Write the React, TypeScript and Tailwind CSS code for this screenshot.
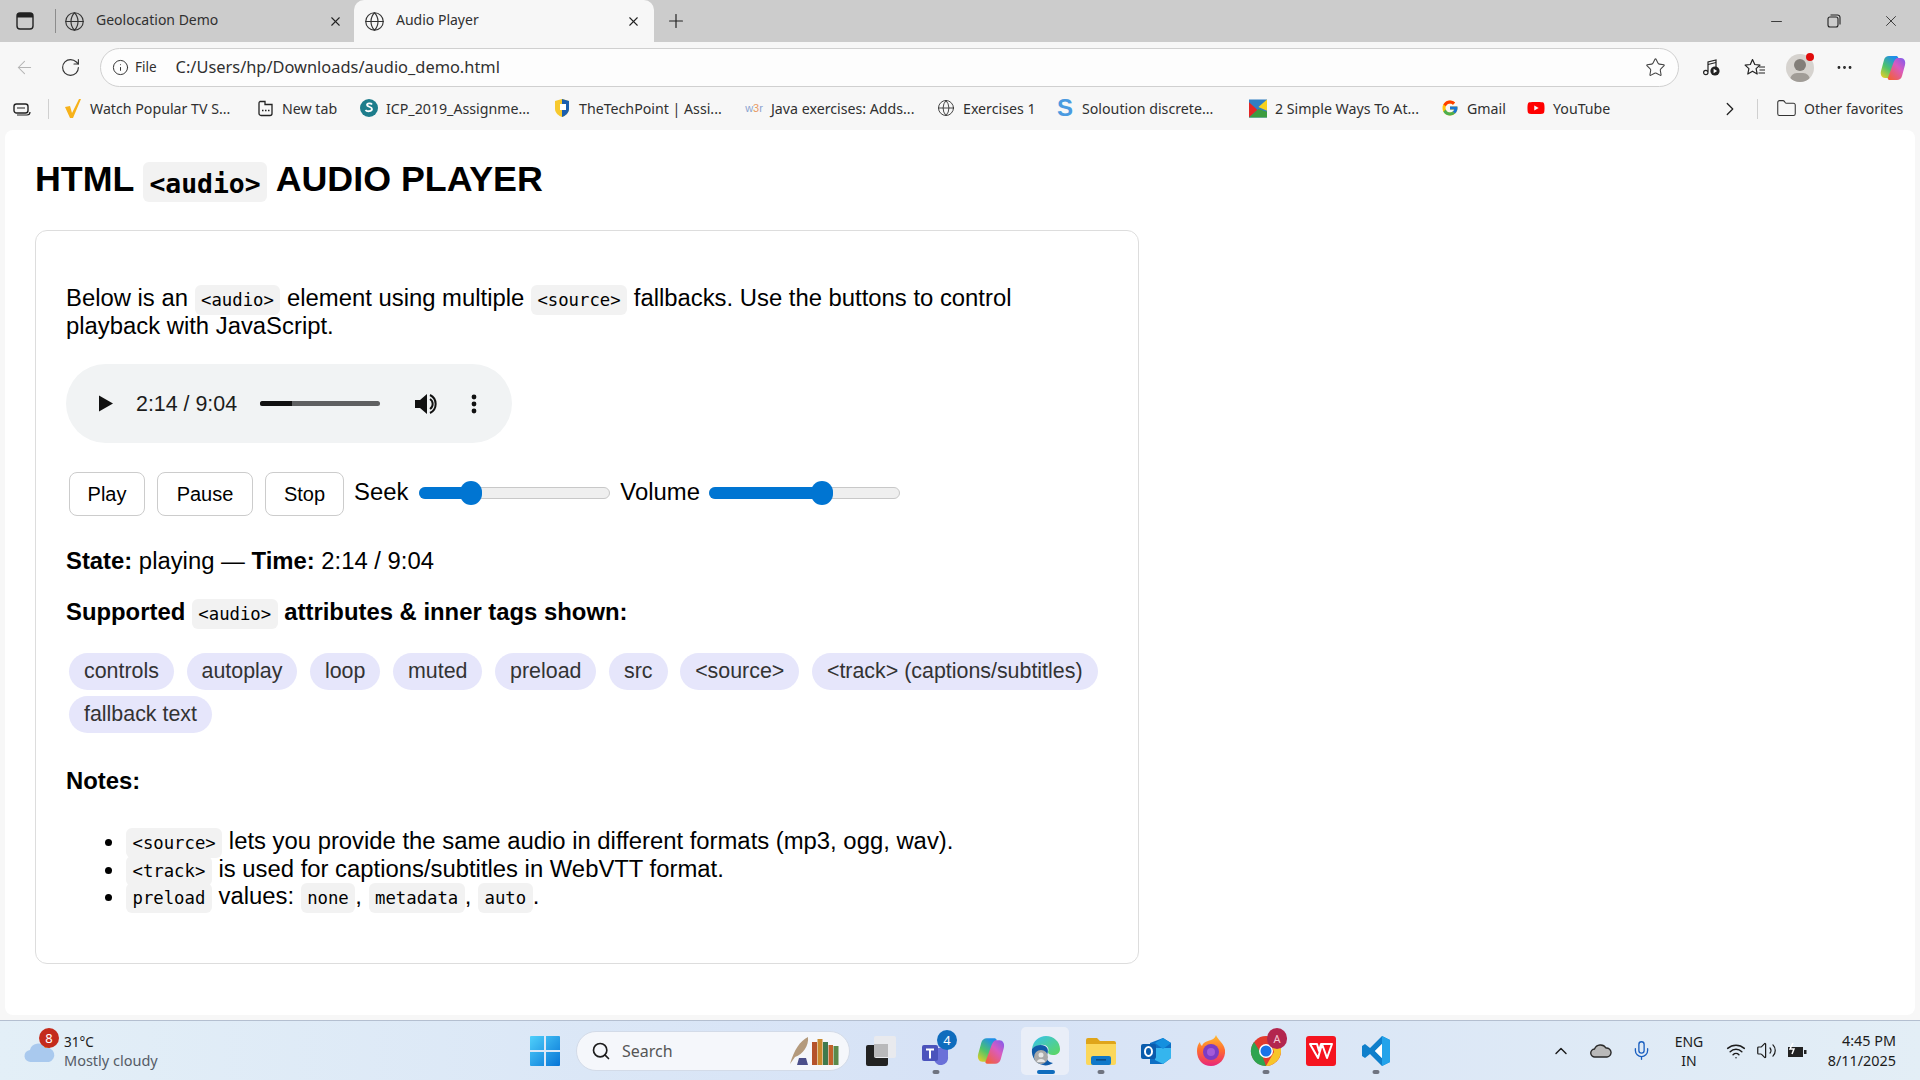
import { ArrowLeft, RotateCw, Info, Globe, X, Plus, Star, Minus, ChevronRight, Folder, ChevronUp, Mic, Wifi, Volume2, Search, MoreHorizontal } from 'lucide-react';
import { FcGoogle } from 'react-icons/fc';
import { FaYoutube } from 'react-icons/fa';

const CHROME = "font-['Noto_Sans','Open_Sans',sans-serif]";

function Code({ children }: { children: React.ReactNode }) {
  return <code className="font-['DejaVu_Sans_Mono',monospace] text-[17.3px] leading-none font-normal bg-[#f2f2f2] rounded-[6px] px-[6.5px] py-[5px]">{children}</code>;
}

function Bookmark({ icon, label, className }: { icon: React.ReactNode; label: string; className: string }) {
  return (
    <div className={`flex items-center shrink-0 ${className}`}>
      <span className="w-[18px] h-[18px] flex items-center justify-center shrink-0">{icon}</span>
      <span className="text-[14.2px] text-[#303030] whitespace-nowrap ml-[8px]">{label}</span>
    </div>
  );
}

function CopilotLogo({ size, id }: { size: number; id: string }) {
  return (
    <svg width={size} height={size} viewBox="0 0 28 28">
      <defs>
        <linearGradient id={`${id}a`} x1="0" y1="1" x2="0.6" y2="0"><stop offset="0" stopColor="#f5d020" /><stop offset="0.5" stopColor="#4fc36a" /><stop offset="1" stopColor="#1f8fe8" /></linearGradient>
        <linearGradient id={`${id}b`} x1="0.2" y1="1" x2="1" y2="0"><stop offset="0" stopColor="#f2603c" /><stop offset="0.55" stopColor="#d95bc0" /><stop offset="1" stopColor="#7a5cf0" /></linearGradient>
      </defs>
      <path d="M10 2h7c1 0 2 .6 2.3 1.6L14 18c-1 3-2 5-4 6H6c-3 0-5-3-4-7l3-11c.6-2.4 2.6-4 5-4z" fill={`url(#${id}a)`} />
      <path d="M18 26h-7c-1 0-2-.6-2.3-1.6L14 10c1-3 2-5 4-6h4c3 0 5 3 4 7l-3 11c-.6 2.4-2.6 4-5 4z" fill={`url(#${id}b)`} />
    </svg>
  );
}

function Tab({ title, active, className }: { title: string; active?: boolean; className: string }) {
  return (
    <div className={`flex items-center h-full shrink-0 ${active ? 'bg-[#f7f7f7] rounded-t-[10px]' : ''} ${className}`}>
      <Globe size={21} strokeWidth={1.3} className="text-[#333] shrink-0" />
      <span className="text-[14px] text-[#303030] ml-[11px] -mt-[3px] flex-1 whitespace-nowrap">{title}</span>
      <X size={15} strokeWidth={1.7} className="text-[#222] shrink-0" />
    </div>
  );
}

function TitleBar() {
  return (
    <div className="h-[42px] bg-[#cccccc] flex items-center shrink-0">
      <div className="w-[50px] flex justify-center">
        <svg width="18" height="18" viewBox="0 0 18 18" fill="none"><rect x="1" y="1" width="16" height="16" rx="3" stroke="#222" strokeWidth="1.4" /><path d="M1 4a3 3 0 0 1 3-3h10a3 3 0 0 1 3 3v1.5H1z" fill="#222" /></svg>
      </div>
      <div className="w-px h-[24px] bg-[#8c8c8c] ml-[5px]" />
      <Tab title="Geolocation Demo" className="w-[298px] pl-[8px] pr-[11px]" />
      <Tab title="Audio Player" active className="w-[300px] pl-[10px] pr-[13px]" />
      <Plus size={22} strokeWidth={1.3} className="text-[#222] ml-[11px]" />
      <div className="flex-1" />
      <Minus size={17} strokeWidth={1.2} className="text-[#222] mr-[42px]" />
      <svg width="14" height="14" viewBox="0 0 14 14" fill="none" className="mr-[41px]"><rect x="1" y="3" width="10" height="10" rx="2" stroke="#222" strokeWidth="1.1" /><path d="M3.5 1h7a2.5 2.5 0 0 1 2.5 2.5v7" stroke="#222" strokeWidth="1.1" /></svg>
      <X size={18} strokeWidth={1.1} className="text-[#222] mr-[20px]" />
    </div>
  );
}

function Toolbar() {
  return (
    <div className="h-[45px] bg-[#f7f7f7] flex items-start pt-[6px] shrink-0">
      <div className="w-[100px] h-[39px] flex items-center shrink-0">
        <ArrowLeft size={21} strokeWidth={1.2} className="text-[#b5b5b5] ml-[14px]" />
        <RotateCw size={21} strokeWidth={1.3} className="text-[#333] ml-[25px]" />
      </div>
      <div className="w-[1579px] h-[39px] bg-[#fdfdfd] border border-[#d0d0d0] rounded-full flex items-center pl-[11px] pr-[12px] shrink-0">
        <Info size={17} strokeWidth={1.4} className="text-[#333]" />
        <span className="text-[13.5px] text-[#303030] ml-[6px]">File</span>
        <span className="text-[16.4px] text-[#303030] ml-[19px]">C:/Users/hp/Downloads/audio_demo.html</span>
        <div className="flex-1" />
        <Star size={21} strokeWidth={1.2} className="text-[#444]" />
      </div>
      <div className="flex-1 h-[39px] flex items-center relative">
        <svg width="19" height="19" viewBox="0 0 19 19" fill="none" className="absolute left-[23px]"><path d="M6 13.5V4l8-2v7" stroke="#222" strokeWidth="1.2" /><path d="M6 6.5l8-2" stroke="#222" strokeWidth="1.2" /><circle cx="3.8" cy="14.5" r="2.2" stroke="#222" strokeWidth="1.2" /><circle cx="13" cy="13" r="4.6" fill="#222" /><path d="M11.6 10.8v4.4l3.5-2.2z" fill="#fff" /></svg>
        <svg width="22" height="20" viewBox="0 0 22 20" fill="none" className="absolute left-[65px]"><path d="M8.5 1.5l2.3 5 5.2.6-3.9 3.5 1.1 5.4-4.7-2.8-4.7 2.8 1.1-5.4L1.1 7.1l5.2-.6z" stroke="#222" strokeWidth="1.2" strokeLinejoin="round" /><path d="M15 9h6M15.5 12h5.5M14.5 15h6.5" stroke="#222" strokeWidth="1.1" /></svg>
        <div className="absolute left-[107px] w-[28px] h-[28px] rounded-full bg-[#d6d3cf] overflow-hidden">
          <div className="w-[12px] h-[12px] rounded-full bg-[#827e79] mx-auto mt-[5px]" />
          <div className="w-[20px] h-[14px] rounded-full bg-[#a09c97] mx-auto mt-[2px]" />
        </div>
        <div className="absolute left-[127px] top-[5px] w-[8px] h-[8px] rounded-full bg-[#e00b0b]" />
        <MoreHorizontal size={19} strokeWidth={1.6} className="absolute left-[156px] text-[#222]" />
        <span className="absolute left-[200px]"><CopilotLogo size={28} id="cpt" /></span>
      </div>
    </div>
  );
}

function BookmarksBar() {
  return (
    <div className="h-[43px] bg-[#f7f7f7] flex items-center shrink-0">
      <svg width="18" height="16" viewBox="0 0 18 16" fill="none" className="ml-[13px]"><rect x="1" y="3" width="14" height="9" rx="2.5" stroke="#222" strokeWidth="1.4" /><path d="M4 7h8M4 14h10a3 3 0 0 0 3-3" stroke="#222" strokeWidth="1.2" /></svg>
      <div className="w-px h-[20px] bg-[#d0d0d0] ml-[17px]" />
      <Bookmark className="ml-[15px] w-[192px]" label="Watch Popular TV S..." icon={<svg width="18" height="20" viewBox="0 0 18 20"><path d="M1 9l5-1 2 7L15 1h2L9 20H6z" fill="#f7b21a" /></svg>} />
      <Bookmark className="w-[104px]" label="New tab" icon={<svg width="17" height="17" viewBox="0 0 17 17" fill="none"><path d="M3 1.5h5v3h7v9a2 2 0 0 1-2 2H4a2 2 0 0 1-2-2v-10a2 2 0 0 1 1-2z" stroke="#222" strokeWidth="1.3" /><path d="M5 10.5h1.5M8 10.5h1.5M11 10.5h1.5" stroke="#222" strokeWidth="1.4" /></svg>} />
      <Bookmark className="w-[193px]" label="ICP_2019_Assignme..." icon={<svg width="18" height="18" viewBox="0 0 18 18"><circle cx="9" cy="9" r="9" fill="#1d7d8c" /><path d="M12 5.5c-1-1.5-5-1.5-5 .5s5 1.5 5 4-5 3-6.5 1" stroke="#fff" strokeWidth="1.8" fill="none" /></svg>} />
      <Bookmark className="w-[192px]" label="TheTechPoint | Assi..." icon={<svg width="18" height="20" viewBox="0 0 18 20"><path d="M9 1l7 2v8c0 4-4 7-7 8-3-1-7-4-7-8V3z" fill="#f7c92e" /><path d="M9 1l7 2v8c0 4-4 7-7 8z" fill="#1b5fae" /><rect x="7" y="6" width="6" height="6" fill="#fff" /></svg>} />
      <Bookmark className="w-[192px]" label="Java exercises: Adds..." icon={<span className="text-[11px] font-['Liberation_Sans',sans-serif] whitespace-nowrap"><span className="text-[#8aa3d0]">w</span><span className="text-[#e89a62]">3</span><span className="text-[#8aa3d0]">r</span></span>} />
      <Bookmark className="w-[119px]" label="Exercises 1" icon={<Globe size={20} strokeWidth={1.2} className="text-[#333]" />} />
      <Bookmark className="w-[193px]" label="Soloution discrete..." icon={<span className="text-[24px] leading-none font-bold text-[#4a9ae0] font-['Liberation_Sans',sans-serif]">S</span>} />
      <Bookmark className="w-[192px]" label="2 Simple Ways To At..." icon={<svg width="19" height="19" viewBox="0 0 19 19"><rect width="19" height="19" fill="#2f7fc4" /><path d="M19 0v12l-9-4z" fill="#f7d21e" /><path d="M0 19V3l9 8z" fill="#e32626" /><path d="M0 19h19v-6l-9-3z" fill="#3c9c3e" /></svg>} />
      <Bookmark className="w-[86px]" label="Gmail" icon={<FcGoogle size={18} />} />
      <Bookmark className="w-[192px]" label="YouTube" icon={<FaYoutube size={20} className="text-[#f00]" />} />
      <ChevronRight size={22} strokeWidth={1.4} className="text-[#222]" />
      <div className="w-px h-[20px] bg-[#d0d0d0] ml-[16px]" />
      <Folder size={21} strokeWidth={1.2} className="text-[#333] ml-[18px]" />
      <span className="text-[14px] text-[#303030] ml-[7px] whitespace-nowrap">Other favorites</span>
    </div>
  );
}

function AudioControl() {
  return (
    <div className="w-[446px] h-[79px] bg-[#f1f3f4] rounded-full flex items-center text-[#1c1c1c] text-[21.4px] mt-[24px]">
      <svg width="14" height="17" viewBox="0 0 14 16" className="ml-[33px]"><path d="M0 0l14 8-14 8z" fill="#111" /></svg>
      <span className="ml-[23px] whitespace-nowrap">2:14 / 9:04</span>
      <div className="ml-[23px] w-[120px] h-[5px] rounded-full bg-[#5f6061] overflow-hidden">
        <div className="w-[32px] h-full bg-[#111]" />
      </div>
      <svg width="26" height="24" viewBox="0 0 26 24" className="ml-[34px]"><path d="M1 8h5l7-6v20l-7-6H1z" fill="#111" /><path d="M16 7a6 6 0 0 1 0 10M16 3a10 10 0 0 1 0 18" stroke="#111" strokeWidth="2" fill="none" /></svg>
      <svg width="6" height="20" viewBox="0 0 6 20" className="ml-[31px]"><circle cx="3" cy="3" r="2.4" fill="#111" /><circle cx="3" cy="10" r="2.4" fill="#111" /><circle cx="3" cy="17" r="2.4" fill="#111" /></svg>
    </div>
  );
}

function Btn({ label, className }: { label: string; className: string }) {
  return <button className={`h-[44px] bg-white border border-[#ccc] rounded-[8px] text-[20px] text-black flex items-center justify-center shrink-0 ${className}`}>{label}</button>;
}

function Slider({ className, fill, thumb }: { className: string; fill: string; thumb: string }) {
  return (
    <div className={`relative w-[191px] h-[12px] -mt-[2px] bg-[#efefef] border border-[#c8c8c8] rounded-full shrink-0 ${className}`}>
      <div className={`h-[12px] -mt-px -ml-px bg-[#0075d2] rounded-full ${fill}`} />
      <div className={`absolute top-[-7px] w-[22px] h-[24px] bg-[#0075d2] rounded-full ${thumb}`} />
    </div>
  );
}

const attrs = ['controls', 'autoplay', 'loop', 'muted', 'preload', 'src', '<source>', '<track> (captions/subtitles)', 'fallback text'];

function Page() {
  return (
    <div className="flex-1 bg-white rounded-[8px] mx-[5px] mb-[5px] pl-[30px] font-['Liberation_Sans',Arial,sans-serif] text-black text-[23.85px] leading-[28px] overflow-hidden">
      <h1 className="text-[35.8px] font-bold leading-[40px] mt-[29px] flex items-center whitespace-nowrap">
        HTML
        <code className="font-['DejaVu_Sans_Mono',monospace] text-[26.4px] font-bold bg-[#f2f2f2] rounded-[6px] px-[6px] h-[40px] leading-[44px] ml-[9px] mr-[9px] translate-y-[3px]">&lt;audio&gt;</code>
        AUDIO PLAYER
      </h1>
      <div className="w-[1104px] h-[734px] mt-[31px] border border-[#dddddd] rounded-[12px] pl-[30px] pt-[53px]">
        <p>
          Below is an <Code>&lt;audio&gt;</Code> element using multiple <Code>&lt;source&gt;</Code> fallbacks. Use the buttons to control<br />playback with JavaScript.
        </p>
        <AudioControl />
        <div className="flex items-center mt-[29px] ml-[3px]">
          <Btn label="Play" className="w-[76px]" />
          <Btn label="Pause" className="w-[96px] ml-[12px]" />
          <Btn label="Stop" className="w-[79px] ml-[12px]" />
          <span className="ml-[10px] -mt-[4px]">Seek</span>
          <Slider className="ml-[11px]" fill="w-[53px]" thumb="left-[40px]" />
          <span className="ml-[10px] -mt-[4px]">Volume</span>
          <Slider className="ml-[9px]" fill="w-[113px]" thumb="left-[101px]" />
        </div>
        <p className="mt-[31px]"><b>State:</b> playing — <b>Time:</b> 2:14 / 9:04</p>
        <p className="mt-[23px] font-bold">Supported <Code>&lt;audio&gt;</Code> attributes &amp; inner tags shown:</p>
        <div className="flex flex-wrap gap-x-[12.6px] gap-y-[6px] ml-[3px] mt-[27px]">
          {attrs.map(a => (
            <span key={a} className="h-[37px] px-[15px] bg-[#e6e6fb] rounded-full text-[#333] text-[21.4px] leading-[36px] whitespace-nowrap">{a}</span>
          ))}
        </div>
        <p className="mt-[34px] font-bold">Notes:</p>
        <ul className="list-disc ml-[60px] mt-[32px] leading-[27.5px]">
          <li><Code>&lt;source&gt;</Code> lets you provide the same audio in different formats (mp3, ogg, wav).</li>
          <li><Code>&lt;track&gt;</Code> is used for captions/subtitles in WebVTT format.</li>
          <li><Code>preload</Code> values: <Code>none</Code>, <Code>metadata</Code>, <Code>auto</Code>.</li>
        </ul>
      </div>
    </div>
  );
}

function TaskIcon({ children, className = '' }: { children: React.ReactNode; className?: string }) {
  return <div className={`relative w-[55px] h-[48px] flex items-center justify-center shrink-0 ${className}`}>{children}</div>;
}

function Dot({ blue }: { blue?: boolean }) {
  return <div className={`absolute bottom-[1px] left-1/2 -translate-x-1/2 h-[4px] rounded-full ${blue ? 'w-[18px] bg-[#0f6cbd]' : 'w-[7px] bg-[#6f7480]'}`} />;
}

function Taskbar() {
  return (
    <div className={`h-[60px] border-t border-[#b4bfd0] bg-gradient-to-r from-[#e3eff7] via-[#d6e2f6] to-[#e3eef6] flex items-center shrink-0 relative ${CHROME}`}>
      <div className="relative w-[64px] h-full shrink-0">
        <svg width="32" height="22" viewBox="0 0 32 22" className="absolute left-[24px] top-[20px]"><circle cx="21" cy="5" r="5" fill="#f08a24" /><path d="M7 21a6 6 0 0 1-1-12 8 8 0 0 1 15-2 6.5 6.5 0 0 1 4 14z" fill="#a9c9ee" /></svg>
        <div className="absolute left-[39px] top-[7px] w-[20px] h-[20px] rounded-full bg-[#c42b1c] text-white text-[13px] leading-[20px] text-center">8</div>
      </div>
      <div className="w-[466px] shrink-0 leading-[20px]">
        <div className="text-[13.5px] text-[#1c1c1c]">31°C</div>
        <div className="text-[14.5px] text-[#555b66] -mt-[2px]">Mostly cloudy</div>
      </div>
      <svg width="30" height="30" viewBox="0 0 30 30" className="shrink-0">
        <defs><linearGradient id="win" x1="0" y1="0" x2="1" y2="1"><stop offset="0" stopColor="#4fd0fb" /><stop offset="1" stopColor="#0674d6" /></linearGradient></defs>
        <path d="M0 1a1 1 0 0 1 1-1h13v14H0zM16 0h13a1 1 0 0 1 1 1v13H16zM0 16h14v14H1a1 1 0 0 1-1-1zM16 16h14v13a1 1 0 0 1-1 1H16z" fill="url(#win)" />
      </svg>
      <div className="ml-[16px] w-[274px] h-[40px] rounded-full bg-[#f5f7fb] border border-[#d3dbe8] flex items-center shrink-0">
        <Search size={20} strokeWidth={2} className="text-[#1c1c1c] ml-[14px]" />
        <span className="text-[16px] text-[#555] ml-[11px]">Search</span>
        <div className="flex-1" />
        <svg width="52" height="30" viewBox="0 0 52 30" className="mr-[9px]">
          <path d="M2 28C6 14 12 5 20 1c1 9-5 17-13 20z" fill="#b49a7c" />
          <path d="M11 22h7l2 7H9z" fill="#4b4f8a" />
          <rect x="24" y="6" width="5" height="23" fill="#b5522b" /><rect x="29.5" y="3" width="5" height="26" fill="#c98a2c" /><rect x="35" y="6" width="5" height="23" fill="#3f7a4d" /><rect x="40.5" y="9" width="4.5" height="20" fill="#c2622b" /><rect x="45.5" y="10" width="5" height="19" fill="#5a8a4a" />
        </svg>
      </div>
      <div className="ml-[3px] flex items-center shrink-0">
        <TaskIcon>
          <div className="relative w-[30px] h-[30px]">
            <div className="absolute left-0 bottom-0 w-[22px] h-[21px] bg-[#222] rounded-[2px]" />
            <div className="absolute right-0 top-0 w-[22px] h-[22px] bg-[#e9eaee] rounded-[2px]" />
            <div className="absolute left-[8px] top-[8px] w-[14px] h-[13px] bg-[#b9b9bb]" />
          </div>
        </TaskIcon>
        <TaskIcon>
          <svg width="32" height="28" viewBox="0 0 32 28"><circle cx="22" cy="7" r="4" fill="#7b83eb" /><path d="M11 11h17v9a7 7 0 0 1-14 2l-3-3z" fill="#6a70d8" /><rect x="2" y="8" width="16" height="16" rx="2" fill="#4b53bc" /><path d="M6 11.5h8v2h-3v8H9v-8H6z" fill="#fff" /></svg>
          <div className="absolute right-[6px] top-[3px] w-[20px] h-[20px] rounded-full bg-[#0f6cbd] text-white text-[13px] leading-[20px] text-center">4</div>
          <Dot />
        </TaskIcon>
        <TaskIcon><CopilotLogo size={30} id="cpb" /></TaskIcon>
        <TaskIcon>
          <div className="absolute left-[3px] top-0 w-[48px] h-[48px] bg-[#e9eef8] rounded-[5px]" />
          <svg width="32" height="32" viewBox="0 0 32 32" className="relative">
            <defs><linearGradient id="edg" x1="0" y1="0" x2="1" y2="1"><stop offset="0" stopColor="#35c1f1" /><stop offset="1" stopColor="#5fd85b" /></linearGradient></defs>
            <path d="M2 14C3 6 9 1 16 1c8 0 14 6 14 13 0 4-3 6-7 6-3 0-5-1-5-3 2-4-2-8-7-7-4 .6-7 2-9 4z" fill="url(#edg)" />
            <path d="M2 14c3-4 9-5 13-3 4 2 3 7 2 9-1 3 0 7 6 8-3 2-7 3-10 2C6 29 1 22 2 14z" fill="#0f5aa8" />
            <circle cx="11" cy="22" r="7" fill="#a9a9a9" /><circle cx="11" cy="20" r="2.5" fill="#e8e8e8" /><path d="M7 27c0-4 8-4 8 0z" fill="#e8e8e8" />
          </svg>
          <Dot blue />
        </TaskIcon>
        <TaskIcon>
          <svg width="30" height="28" viewBox="0 0 30 28"><path d="M0 3a2 2 0 0 1 2-2h9l3 3h14a2 2 0 0 1 2 2v3H0z" fill="#dfa51a" /><path d="M0 7h30v19a2 2 0 0 1-2 2H2a2 2 0 0 1-2-2z" fill="#fbd75b" /><rect x="5" y="19" width="20" height="9" rx="2" fill="#0f78c9" /><rect x="10" y="22" width="10" height="1.6" fill="#0a4d86" /></svg>
          <Dot />
        </TaskIcon>
        <TaskIcon>
          <svg width="30" height="28" viewBox="0 0 30 28"><path d="M9 6l13-5 8 5v15l-8 6H9z" fill="#0e6fc4" /><path d="M14 11h16v10l-8 6-8-4z" fill="#35b5ee" /><path d="M22 1l8 5-8 6-8-6z" fill="#1490df" /><rect x="0" y="7" width="15" height="15" rx="2" fill="#0a5cad" /><ellipse cx="7.5" cy="14.5" rx="3.5" ry="4.4" fill="none" stroke="#fff" strokeWidth="2" /></svg>
        </TaskIcon>
        <TaskIcon>
          <svg width="30" height="32" viewBox="0 0 30 32">
            <defs><linearGradient id="ff" x1="0.5" y1="0" x2="0.5" y2="1"><stop offset="0" stopColor="#ffbd2e" /><stop offset="0.5" stopColor="#ff6a30" /><stop offset="1" stopColor="#e8267a" /></linearGradient></defs>
            <path d="M20 0c1 4 8 8 9 15 1 9-6 16-14 16S1 25 1 16c0-4 1-7 3-9 0 2 1 3 2 4 1-3 3-4 6-5 3-1 7-2 8-6z" fill="url(#ff)" />
            <circle cx="15" cy="17" r="8" fill="#7c3cc4" /><circle cx="15" cy="17" r="4" fill="#a35ad8" />
          </svg>
        </TaskIcon>
        <TaskIcon>
          <svg width="32" height="32" viewBox="0 0 32 32"><circle cx="16" cy="16" r="15" fill="#e33b2e" /><path d="M3 24A15 15 0 0 1 4 7l8 13 4 11A15 15 0 0 1 3 24z" fill="#2ea44f" /><path d="M31 16c0 8-7 15-15 15l8-14-2-6h8c1 2 1 3 1 5z" fill="#f7c52a" /><circle cx="16" cy="16" r="7" fill="#fff" /><circle cx="16" cy="16" r="5.5" fill="#1a73e8" /></svg>
          <div className="absolute right-[6px] top-[1px] w-[20px] h-[21px] rounded-full bg-[#b3264e] text-[#f5c9d5] text-[11px] leading-[21px] text-center">A</div>
          <Dot />
        </TaskIcon>
        <TaskIcon>
          <div className="w-[30px] h-[30px] rounded-[3px] bg-[#f5141f] flex items-center justify-center">
            <svg width="24" height="16" viewBox="0 0 24 16" fill="none"><path d="M1 1h7l2 7 2-7h1l-4 14zM13 1h10L18 15z" stroke="#fff" strokeWidth="2" strokeLinejoin="round" /></svg>
          </div>
        </TaskIcon>
        <TaskIcon>
          <svg width="30" height="30" viewBox="0 0 30 30"><path d="M21 0l8 4v22l-8 4L9 18l-5 4-3-2v-10l3-2 5 4z" fill="#0f7fcb" /><path d="M21 8l-7 7 7 7z" fill="#f0f6fb" /><path d="M21 0l8 4v22l-8 4z" fill="#23a3ea" /><path d="M21 8v14l-7-7z" fill="#fff" /></svg>
          <Dot />
        </TaskIcon>
      </div>
      <div className="flex-1" />
      <div className="flex items-center shrink-0 text-[#1c1c1c]">
        <ChevronUp size={20} strokeWidth={1.7} />
        <svg width="22" height="14" viewBox="0 0 22 14" className="ml-[19px]"><path d="M5 13a4 4 0 0 1-.5-8A6.5 6.5 0 0 1 16 4a4.5 4.5 0 0 1 1 9z" fill="#b9b9b9" stroke="#2a2a2a" strokeWidth="1.4" /></svg>
        <Mic size={21} strokeWidth={1.5} className="text-[#1a5fc0] ml-[19px]" />
        <div className="w-[50px] text-center text-[14px] leading-[19px] ml-[12px]">ENG<br />IN</div>
        <Wifi size={20} strokeWidth={1.8} className="ml-[12px]" />
        <Volume2 size={21} strokeWidth={1.4} className="ml-[10px]" />
        <svg width="22" height="16" viewBox="0 0 22 16" className="ml-[8px]"><path d="M3 4h15v10H3z" fill="#222" /><rect x="19" y="7" width="2.5" height="4" fill="#222" /><path d="M8 0L5 6h4l-2 5" stroke="#fff" strokeWidth="1.5" fill="none" /></svg>
        <div className="w-[85px] text-right text-[14.4px] leading-[20px] ml-[4px] mr-[24px]">4:45 PM<br />8/11/2025</div>
      </div>
    </div>
  );
}

export default function App() {
  return (
    <div className={`w-[1920px] h-[1080px] flex flex-col overflow-hidden bg-[#f7f7f7] ${CHROME}`}>
      <TitleBar />
      <Toolbar />
      <BookmarksBar />
      <Page />
      <Taskbar />
    </div>
  );
}
